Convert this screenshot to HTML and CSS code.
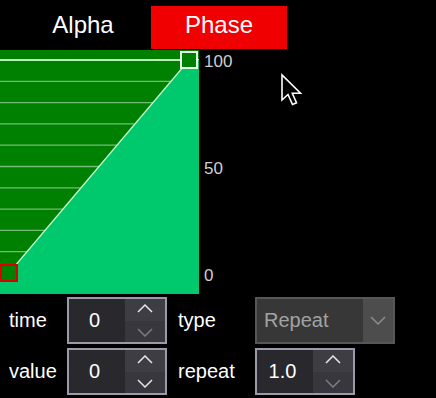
FILE: index.html
```html
<!DOCTYPE html>
<html lang="en">
<head>
    <meta charset="UTF-8">
    <title>Phase Editor</title>
    <link rel="stylesheet" href="styles.css">
</head>
<body>
    <div class="app">
        <div class="tabs">
            <div class="tab">Alpha</div>
            <div class="tab active">Phase</div>
        </div>

        <div class="editor">
            <svg class="curve" width="199" height="244" viewBox="0 0 199 244">
                <rect width="199" height="244" fill="#008000"/>
                <g stroke="#74bc74" stroke-width="1.3">
                    <line x1="0" y1="31.3" x2="199" y2="31.3"/>
                    <line x1="0" y1="52.6" x2="199" y2="52.6"/>
                    <line x1="0" y1="73.9" x2="199" y2="73.9"/>
                    <line x1="0" y1="95.2" x2="199" y2="95.2"/>
                    <line x1="0" y1="116.5" x2="199" y2="116.5"/>
                    <line x1="0" y1="137.8" x2="199" y2="137.8"/>
                    <line x1="0" y1="159.1" x2="199" y2="159.1"/>
                    <line x1="0" y1="180.4" x2="199" y2="180.4"/>
                    <line x1="0" y1="201.7" x2="199" y2="201.7"/>
                </g>
                <line x1="0" y1="10" x2="199" y2="10" stroke="#b8f2b8" stroke-width="2"/>
                <polygon points="9,223 189,10 199,10 199,244 0,244 0,223" fill="#00c86c"/>
                <line x1="9" y1="223" x2="189" y2="10" stroke="#c8f8d0" stroke-width="1.2"/>
                <rect x="181" y="2" width="16" height="16" fill="#008000" stroke="#e8ffe8" stroke-width="2"/>
                <rect x="1" y="215" width="16" height="16" fill="#008000" stroke="#d80000" stroke-width="2"/>
            </svg>
            <div class="axis">
                <span>100</span>
                <span>50</span>
                <span>0</span>
            </div>
        </div>

        <div class="fields">
            <span class="label">time</span>
            <div class="spin">
                <div class="spin-value">0</div>
                <div class="spin-buttons">
                    <div class="spin-btn up"><svg width="16" height="9" viewBox="0 0 16 9"><polyline points="1,8 8,1 15,8"/></svg></div>
                    <div class="spin-btn down disabled"><svg width="16" height="9" viewBox="0 0 16 9"><polyline points="1,1 8,8 15,1"/></svg></div>
                </div>
            </div>
            <span class="label second">type</span>
            <div class="select">
                <div class="select-value">Repeat</div>
                <div class="select-arrow"><svg width="16" height="9" viewBox="0 0 16 9"><polyline points="1,1 8,8 15,1"/></svg></div>
            </div>

            <span class="label">value</span>
            <div class="spin">
                <div class="spin-value">0</div>
                <div class="spin-buttons">
                    <div class="spin-btn up"><svg width="16" height="9" viewBox="0 0 16 9"><polyline points="1,8 8,1 15,8"/></svg></div>
                    <div class="spin-btn down"><svg width="16" height="9" viewBox="0 0 16 9"><polyline points="1,1 8,8 15,1"/></svg></div>
                </div>
            </div>
            <span class="label second">repeat</span>
            <div class="spin">
                <div class="spin-value">1.0</div>
                <div class="spin-buttons">
                    <div class="spin-btn up"><svg width="16" height="9" viewBox="0 0 16 9"><polyline points="1,8 8,1 15,8"/></svg></div>
                    <div class="spin-btn down disabled"><svg width="16" height="9" viewBox="0 0 16 9"><polyline points="1,1 8,8 15,1"/></svg></div>
                </div>
            </div>
        </div>

        <svg class="cursor" width="26" height="38" viewBox="0 0 26 38">
            <path d="M2 2 L2 27 L8 21.5 L12.5 31.5 L16.5 29.8 L12.3 20.3 L20.5 20.3 Z" fill="#000" stroke="#fff" stroke-width="1.6" stroke-linejoin="miter"/>
        </svg>
    </div>
</body>
</html>
```

FILE: styles.css
```css
body {
    margin: 0;
    background-color: #000;
    font-family: "Liberation Sans", Arial, sans-serif;
    color: #fff;
    overflow: hidden;
}

.app {
    position: relative;
    width: 436px;
    height: 398px;
}

.tabs {
    display: flex;
    padding: 6px 0 0 15px;
}

.tab {
    width: 136px;
    height: 43px;
    line-height: 37px;
    text-align: center;
    font-size: 24px;
    color: #fff;
}

.tab.active {
    background-color: #f00000;
}

.editor {
    display: flex;
    margin-top: 1px;
    height: 244px;
}

.curve {
    display: block;
}

.axis {
    display: flex;
    flex-direction: column;
    justify-content: space-between;
    margin-left: 5px;
    padding: 2px 0 8px;
    font-size: 17px;
    line-height: 20px;
    color: #cfcfcf;
}

.fields {
    display: grid;
    grid-template-columns: 58px 100px 88px auto;
    grid-auto-rows: 47px;
    row-gap: 4px;
    align-items: center;
    margin-top: 3px;
    padding-left: 9px;
}

.label {
    font-size: 20px;
    color: #fff;
}

.label.second {
    padding-left: 11px;
}

.spin {
    display: flex;
    width: 100px;
    height: 47px;
    box-sizing: border-box;
    border: 2px solid #9c9aa8;
}

.spin-value {
    flex: 1;
    padding-right: 5px;
    background-color: #29282d;
    font-size: 20px;
    line-height: 43px;
    text-align: center;
}

.spin-buttons {
    width: 40px;
    display: flex;
    flex-direction: column;
    background-color: #38373d;
}

.spin-btn {
    flex: 1;
    display: flex;
    align-items: center;
    justify-content: center;
}

.spin-btn.up {
    background-color: #3e3d43;
    padding-bottom: 3px;
}

.spin-btn.down {
    padding-top: 2px;
}

.spin-btn svg polyline,
.select-arrow svg polyline {
    fill: none;
    stroke: #e6e6e6;
    stroke-width: 1.5;
}

.spin-btn.disabled svg polyline {
    stroke: #7d7c84;
}

.select {
    display: flex;
    width: 140px;
    height: 47px;
    box-sizing: border-box;
    border: 2px solid #575757;
    background-color: #373737;
}

.select-value {
    flex: 1;
    padding-left: 7px;
    font-size: 20px;
    line-height: 43px;
    color: #a2a2a2;
}

.select-arrow {
    width: 30px;
    display: flex;
    align-items: center;
    justify-content: center;
    background-color: #4d4d4d;
}

.select-arrow svg polyline {
    stroke: #8c8c8c;
}

.cursor {
    position: absolute;
    left: 280px;
    top: 73px;
}
```
